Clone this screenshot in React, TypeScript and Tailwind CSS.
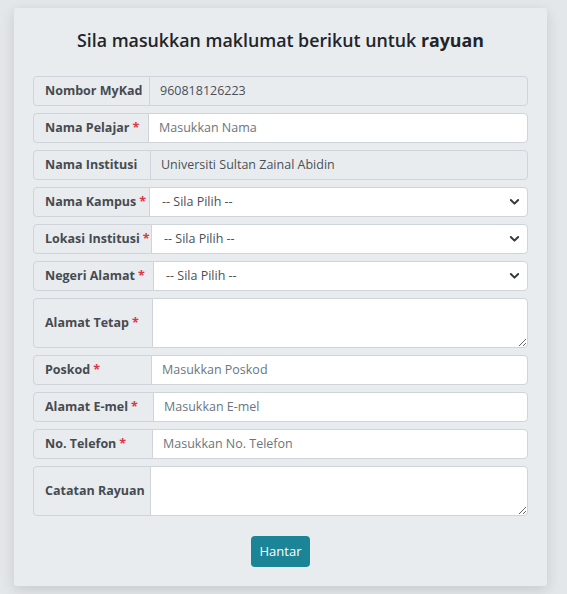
import React from "react";

const font = { fontFamily: '"Open Sans", "Noto Sans", sans-serif' };

function Req() {
  return <span className="text-[#dc3545] ml-[3px]">*</span>;
}

function Label({ w, children }: { w: string; children: React.ReactNode }) {
  return (
    <div
      className={`${w} shrink-0 flex items-center bg-[#e9ecef] border border-[#ced4da] rounded-l-[4px] pl-[11px] pt-px font-bold text-[12.5px] text-[#454b51] whitespace-nowrap`}
    >
      {children}
    </div>
  );
}

function Chevron() {
  return (
    <svg className="absolute right-[8px] top-1/2 -translate-y-1/2 pointer-events-none" width="11" height="8" viewBox="0 0 16 12">
      <path d="M2.5 3l5.5 5.5L13.5 3" fill="none" stroke="#343a40" strokeWidth="3" strokeLinecap="round" strokeLinejoin="round" />
    </svg>
  );
}

export default function App() {
  const inputCls =
    "flex-1 min-w-0 -ml-px bg-white border border-[#ced4da] rounded-r-[4px] px-[10px] pt-px text-[12.5px] text-[#495057] placeholder:text-[#6c757d] outline-none";
  const taCls =
    "flex-1 min-w-0 -ml-px bg-white border border-[#ced4da] rounded-r-[4px] px-[10px] py-[5px] text-[12.5px] text-[#495057] outline-none resize-y";
  return (
    <div className="min-h-[594px] bg-[#e4e7ea] pt-[8px]" style={font}>
      <div className="ml-[14px] w-[533px] bg-[#e9ecef] rounded-[3px] shadow-[0_4px_14px_rgba(0,0,0,0.13)] px-[19px] pt-[18px] pb-[19px]">
        <h2 className="text-center text-[17.8px] leading-[28px] font-semibold text-[#212529] mb-[22px]">
          Sila masukkan maklumat berikut untuk <span className="font-bold">rayuan</span>
        </h2>
        <div className="flex flex-col gap-[7px]">
          <div className="flex h-[30px]">
            <Label w="w-[117px]">Nombor MyKad</Label>
            <div className="flex-1 -ml-px flex items-center bg-[#e9ecef] border border-[#ced4da] rounded-r-[4px] px-[10px] pt-px text-[12.5px] text-[#495057]">
              960818126223
            </div>
          </div>
          <div className="flex h-[30px]">
            <Label w="w-[116px]">Nama Pelajar<Req /></Label>
            <input className={inputCls} placeholder="Masukkan Nama" />
          </div>
          <div className="flex h-[30px]">
            <Label w="w-[118px]">Nama Institusi</Label>
            <div className="flex-1 -ml-px flex items-center bg-[#e9ecef] border border-[#ced4da] rounded-r-[4px] px-[10px] pt-px text-[12.5px] text-[#495057]">
              Universiti Sultan Zainal Abidin
            </div>
          </div>
          {[
            ["w-[117px]", "Nama Kampus"],
            ["w-[119px]", "Lokasi Institusi"],
            ["w-[121px]", "Negeri Alamat"],
          ].map(([w, t]) => (
            <div key={t} className="flex h-[30px]">
              <Label w={w}>{t}<Req /></Label>
              <div className="relative flex-1 -ml-px">
                <select className="appearance-none w-full h-full bg-white border border-[#ced4da] rounded-r-[4px] pl-[12px] pr-[24px] pt-px text-[12.5px] text-[#495057] outline-none">
                  <option>-- Sila Pilih --</option>
                </select>
                <Chevron />
              </div>
            </div>
          ))}
          <div className="flex h-[50px]">
            <Label w="w-[120px]">Alamat Tetap<Req /></Label>
            <textarea className={taCls} />
          </div>
          <div className="flex h-[30px]">
            <Label w="w-[119px]">Poskod<Req /></Label>
            <input className={inputCls} placeholder="Masukkan Poskod" />
          </div>
          <div className="flex h-[30px]">
            <Label w="w-[121px]">Alamat E-mel<Req /></Label>
            <input className={inputCls} placeholder="Masukkan E-mel" />
          </div>
          <div className="flex h-[30px]">
            <Label w="w-[120px]">No. Telefon<Req /></Label>
            <input className={inputCls} placeholder="Masukkan No. Telefon" />
          </div>
          <div className="flex h-[50px]">
            <Label w="w-[118px]">Catatan Rayuan</Label>
            <textarea className={taCls} />
          </div>
        </div>
        <div className="flex justify-center mt-[20px]">
          <button className="h-[31px] w-[59px] rounded-[4px] bg-[#1b8497] text-white text-[13px]">Hantar</button>
        </div>
      </div>
    </div>
  );
}
